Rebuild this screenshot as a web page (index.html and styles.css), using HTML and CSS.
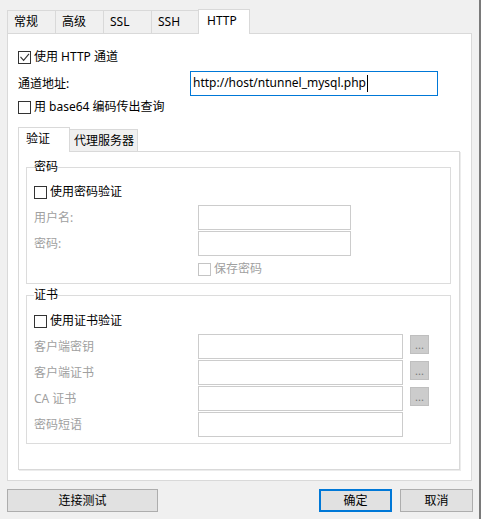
FILE: index.html
```html
<!DOCTYPE html>
<html lang="zh-CN">
<head>
    <meta charset="UTF-8">
    <title>HTTP 通道</title>
    <link rel="stylesheet" href="styles.css">
</head>
<body>
    <div class="window">

        <!-- Top tabs -->
        <div class="tabs">
            <span class="tab">常规</span>
            <span class="tab">高级</span>
            <span class="tab">SSL</span>
            <span class="tab">SSH</span>
            <span class="tab tab-active">HTTP</span>
        </div>

        <div class="panel">
            <label class="check"><span class="box"><svg width="11" height="11" viewBox="0 0 11 11"><path d="M1.5 4.8 L4.6 8.3 L10 1.8" fill="none" stroke="#333" stroke-width="1.1"/></svg></span>使用 HTTP 通道</label>

            <div class="url-row">
                <span class="url-label">通道地址:</span>
                <div class="url-input">http://host/ntunnel_mysql.php<span class="caret"></span></div>
            </div>

            <label class="check check-base64"><span class="box"></span>用 base64 编码传出查询</label>

            <!-- Sub tabs -->
            <div class="subtabs">
                <span class="subtab subtab-active">验证</span>
                <span class="subtab subtab-proxy">代理服务器</span>
            </div>

            <div class="subpanel">
                <fieldset class="group group-password">
                    <legend>密码</legend>
                    <label class="check group-check"><span class="box"></span>使用密码验证</label>
                    <div class="fields">
                        <span class="field-label">用户名:</span><span class="field"></span>
                        <span class="field-label">密码:</span><span class="field"></span>
                        <span></span>
                        <label class="check disabled save-check"><span class="box"></span>保存密码</label>
                    </div>
                </fieldset>

                <fieldset class="group group-cert">
                    <legend>证书</legend>
                    <label class="check group-check"><span class="box"></span>使用证书验证</label>
                    <div class="fields fields-cert">
                        <span class="field-label">客户端密钥</span><span class="field"></span><span class="browse">...</span>
                        <span class="field-label">客户端证书</span><span class="field"></span><span class="browse">...</span>
                        <span class="field-label">CA 证书</span><span class="field"></span><span class="browse">...</span>
                        <span class="field-label">密码短语</span><span class="field"></span><span></span>
                    </div>
                </fieldset>
            </div>
        </div>

        <!-- Dialog buttons -->
        <div class="actions">
            <span class="btn btn-test">连接测试</span>
            <span class="btn btn-default">确定</span>
            <span class="btn">取消</span>
        </div>
    </div>
</body>
</html>
```

FILE: styles.css
```css
* {
    box-sizing: border-box;
}

body {
    margin: 0;
    background-color: #f0f0f0;
    font-family: "Noto Sans", "Noto Sans CJK SC", sans-serif;
    font-size: 12px;
    line-height: 16px;
    color: #000;
}

.window {
    width: 481px;
    height: 519px;
    padding: 9px 0 0 7px;
    border-right: 2px solid #7a7a7a;
}

/* Top tabs */
.tabs {
    display: flex;
    align-items: flex-end;
    height: 24px;
}

.tab {
    width: 49px;
    height: 23px;
    padding: 3px 0 0 6px;
    background-color: #f0f0f0;
    border: 1px solid #d9d9d9;
    border-bottom: none;
    margin-left: -1px;
}

.tab:first-child {
    margin-left: 0;
}

.tab-active {
    position: relative;
    z-index: 1;
    width: 52px;
    height: 25px;
    margin-left: -2px;
    margin-bottom: -1px;
    padding-left: 8px;
    background-color: #fff;
}

/* Main panel */
.panel {
    width: 465px;
    height: 448px;
    padding: 15px 11px 10px 10px;
    background-color: #fff;
    border: 1px solid #d9d9d9;
    display: flex;
    flex-direction: column;
}

.check {
    display: flex;
    align-items: center;
    height: 16px;
}

.box {
    width: 13px;
    height: 13px;
    margin-right: 3px;
    border: 1px solid #333;
    background-color: #fff;
    display: flex;
}

.disabled {
    color: #a0a0a0;
}

.disabled .box {
    border-color: #c4c4c4;
}

.url-row {
    display: flex;
    align-items: center;
    margin-top: 6px;
}

.url-label {
    width: 172px;
}

.url-input {
    width: 248px;
    height: 25px;
    padding: 3px 0 0 2px;
    border: 1px solid #0078d7;
    display: flex;
    align-items: flex-start;
}

.caret {
    width: 1px;
    height: 17px;
    margin-left: 1px;
    background-color: #000;
}

.check-base64 {
    margin-top: 3px;
}

/* Sub tabs */
.subtabs {
    display: flex;
    align-items: flex-end;
    height: 24px;
    margin-top: 12px;
}

.subtab {
    height: 22px;
    padding: 3px 0 0 4px;
    background-color: #f0f0f0;
    border: 1px solid #d9d9d9;
    border-bottom: none;
}

.subtab-active {
    position: relative;
    z-index: 1;
    width: 52px;
    height: 25px;
    margin-bottom: -1px;
    padding-left: 7px;
    background-color: #fff;
}

.subtab-proxy {
    width: 69px;
    margin-left: -1px;
}

.subpanel {
    flex: 1;
    padding: 7px 8px 0 7px;
    border: 1px solid #d9d9d9;
    box-shadow: 1px 1px 0 #ececec;
}

/* Group boxes */
.group {
    margin: 0;
    padding: 0 7px 6px 7px;
    border: 1px solid #dcdcdc;
    min-width: 0;
}

.group legend {
    padding: 0;
    line-height: 16px;
}

.group-cert {
    margin-top: 3px;
}

.group-check {
    margin-top: 9px;
}

.group-cert .group-check {
    margin-top: 10px;
}

.fields {
    display: grid;
    grid-template-columns: 164px 153px;
    grid-template-rows: 25px 25px 20px;
    row-gap: 1px;
    margin-top: 5px;
    align-items: center;
}

.fields-cert {
    grid-template-columns: 164px 205px 26px;
    grid-template-rows: repeat(4, 25px);
}

.field-label {
    color: #a0a0a0;
}

.field {
    height: 25px;
    border: 1px solid #cccccc;
    background-color: #fff;
}

.save-check {
    align-self: end;
    height: 16px;
}

.browse {
    width: 19px;
    height: 19px;
    margin-left: 7px;
    align-self: start;
    margin-top: 1px;
    background-color: #cccccc;
    border: 1px solid #bfbfbf;
    color: #7a7a7a;
    font-size: 11px;
    line-height: 18px;
    text-align: center;
}

/* Dialog buttons */
.actions {
    display: flex;
    gap: 8px;
    width: 466px;
    margin-top: 8px;
}

.btn {
    width: 73px;
    height: 23px;
    background-color: #e1e1e1;
    border: 1px solid #adadad;
    display: flex;
    align-items: center;
    justify-content: center;
}

.btn-test {
    width: 151px;
    margin-right: auto;
}

.btn-default {
    border: 2px solid #0078d7;
}
```
